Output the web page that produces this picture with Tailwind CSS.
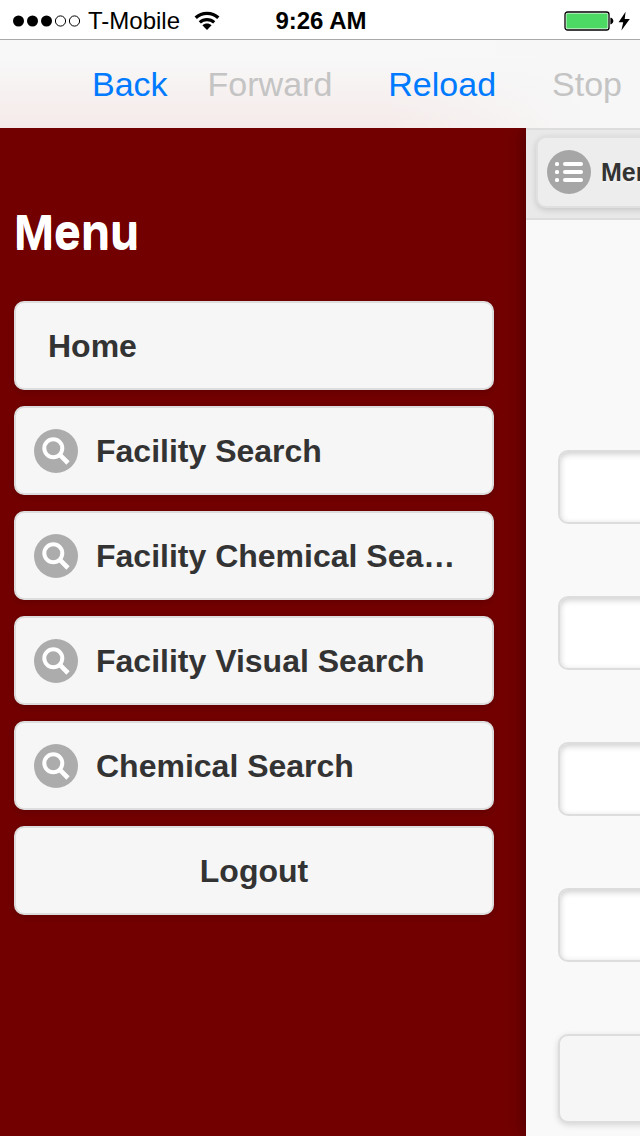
<!DOCTYPE html>
<html lang="en">
<head>
    <meta charset="UTF-8">
    <meta name="viewport" content="width=device-width, initial-scale=1.0">
    <title>Menu</title>
    <script src="https://cdn.jsdelivr.net/npm/@tailwindcss/browser@4"></script>
</head>
<body class="flex flex-col h-screen overflow-hidden bg-[#f9f9f9] text-[#333] font-['Liberation_Sans',Arial,sans-serif]">

    <!-- Icon shapes used more than once -->
    <svg class="hidden">
        <symbol id="icon-search" viewBox="0 0 44 44">
            <circle cx="22" cy="22" r="22" fill="#acacac"/>
            <circle cx="19.3" cy="19.3" r="9" fill="none" stroke="#fff" stroke-width="4"/>
            <path d="M25.4 25.4l8.6 8.6" stroke="#fff" stroke-width="4.6"/>
        </symbol>
    </svg>

    <!-- Status bar -->
    <div class="grid grid-cols-[1fr_auto_1fr] items-center h-10 shrink-0 pl-3 pr-2.5 pt-0.5 bg-white border-b border-[#a9a9a9] text-black text-2xl">
        <div class="flex items-center">
            <svg class="w-[70px] h-4" viewBox="0 0 70 16">
                <circle cx="6.5" cy="8" r="5.5"/>
                <circle cx="20.5" cy="8" r="5.5"/>
                <circle cx="34.5" cy="8" r="5.5"/>
                <circle cx="48.5" cy="8" r="5.1" fill="none" stroke="#000"/>
                <circle cx="62.5" cy="8" r="5.1" fill="none" stroke="#000"/>
            </svg>
            <span class="ml-1.5">T-Mobile</span>
            <svg class="w-[26px] h-5 ml-3.5" viewBox="0 0 26 20" fill="none" stroke="#000">
                <path d="M1.7 6.8C8 .9 18 .9 24.3 6.8" stroke-width="3.4"/>
                <path d="M5.8 11.4C10 7.6 16 7.6 20.2 11.4" stroke-width="3.2"/>
                <path d="M13 19L8.4 14.3C11 12 15 12 17.6 14.3Z" fill="#000" stroke="none"/>
            </svg>
        </div>
        <div class="font-bold">9:26 AM</div>
        <div class="flex items-center justify-end">
            <svg class="w-[50px] h-5" viewBox="0 0 50 20">
                <rect x="1" y="1" width="44" height="18" rx="2.6" fill="none" stroke="#000" stroke-width="1.3"/>
                <rect x="2.4" y="2.4" width="41.2" height="15.2" rx="1" fill="#4cd964"/>
                <path d="M46.4 6.8h.7c3 1.4 3 5 0 6.4h-.7z"/>
            </svg>
            <svg class="w-3 h-5 ml-1" viewBox="0 0 12 20">
                <path d="M7.6.8L.6 11.2h4.6L3.4 19.4 11.8 8H6.7z"/>
            </svg>
        </div>
    </div>

    <div class="flex items-center justify-end h-[88px] shrink-0 pr-[18px] text-[34px] text-[#007aff] relative z-20 bg-[linear-gradient(to_right,transparent_60%,#f7f7f7_92%),linear-gradient(to_bottom,#f8f8f8_20%,#f5eae9)]">
        <button type="button" class="mr-10">Back</button>
        <button type="button" class="mr-14 disabled:text-[#c4c4c4]" disabled>Forward</button>
        <button type="button" class="mr-14">Reload</button>
        <button type="button" class="disabled:text-[#c4c4c4]" disabled>Stop</button>
    </div>

    <div class="flex flex-1 min-h-0">
        <!-- Menu panel -->
        <nav class="w-[526px] shrink-0 pl-3.5 pr-8 bg-[#720000]">
            <h1 class="mt-[76px] mb-[41px] text-5xl leading-14 font-bold text-white [text-shadow:0_2px_0_#fff]">Menu</h1>
            <div class="flex flex-col gap-4 text-[32px] font-bold">
                <a href="#" class="flex items-center h-[89px] px-8 rounded-[10px] border-2 border-[#ddd] bg-[#f6f6f6] shadow-[0_2px_6px_rgba(0,0,0,0.15)]">Home</a>
                <a href="#" class="flex items-center gap-[18px] h-[89px] pl-[18px] pr-8 rounded-[10px] border-2 border-[#ddd] bg-[#f6f6f6] shadow-[0_2px_6px_rgba(0,0,0,0.15)]">
                    <svg class="size-11 shrink-0"><use href="#icon-search"/></svg>
                    <span class="truncate">Facility Search</span>
                </a>
                <a href="#" class="flex items-center gap-[18px] h-[89px] pl-[18px] pr-8 rounded-[10px] border-2 border-[#ddd] bg-[#f6f6f6] shadow-[0_2px_6px_rgba(0,0,0,0.15)]">
                    <svg class="size-11 shrink-0"><use href="#icon-search"/></svg>
                    <span class="truncate">Facility Chemical Search</span>
                </a>
                <a href="#" class="flex items-center gap-[18px] h-[89px] pl-[18px] pr-8 rounded-[10px] border-2 border-[#ddd] bg-[#f6f6f6] shadow-[0_2px_6px_rgba(0,0,0,0.15)]">
                    <svg class="size-11 shrink-0"><use href="#icon-search"/></svg>
                    <span class="truncate">Facility Visual Search</span>
                </a>
                <a href="#" class="flex items-center gap-[18px] h-[89px] pl-[18px] pr-8 rounded-[10px] border-2 border-[#ddd] bg-[#f6f6f6] shadow-[0_2px_6px_rgba(0,0,0,0.15)]">
                    <svg class="size-11 shrink-0"><use href="#icon-search"/></svg>
                    <span class="truncate">Chemical Search</span>
                </a>
                <button type="button" class="h-[89px] px-8 rounded-[10px] border-2 border-[#ddd] bg-[#f6f6f6] shadow-[0_2px_6px_rgba(0,0,0,0.15)]">Logout</button>
            </div>
        </nav>

        <!-- Page pushed aside by the panel -->
        <main class="w-full shrink-0 relative z-10 bg-[#f9f9f9] shadow-[0_0_18px_rgba(0,0,0,0.4)]">
            <header class="flex px-2.5 py-1.5 h-[92px] border-y-2 border-[#ddd] bg-[#e9e9e9]">
                <button type="button" class="flex items-center gap-2.5 h-[72px] pl-[9px] pr-5 rounded-[10px] border-2 border-[#e0e0e0] bg-[#ededed] text-[25px] font-bold shadow-[0_2px_6px_rgba(0,0,0,0.15)] [text-shadow:0_2px_0_#f3f3f3]">
                    <svg class="size-11" viewBox="0 0 44 44">
                        <circle cx="22" cy="22" r="22" fill="#a6a6a6"/>
                        <g fill="#fff">
                            <rect x="8" y="12" width="4" height="4" rx="1.6"/>
                            <rect x="16" y="12" width="20" height="4" rx="2"/>
                            <rect x="8" y="20" width="4" height="4" rx="1.6"/>
                            <rect x="16" y="20" width="20" height="4" rx="2"/>
                            <rect x="8" y="28" width="4" height="4" rx="1.6"/>
                            <rect x="16" y="28" width="20" height="4" rx="2"/>
                        </g>
                    </svg>
                    <span class="pt-0.5">Menu</span>
                </button>
            </header>
            <form class="flex flex-col gap-[72px] mt-[230px] px-8">
                <input type="text" aria-label="Name" class="h-[74px] px-3 rounded-[10px] border-2 border-[#ddd] bg-white text-[32px] shadow-[inset_0_2px_6px_rgba(0,0,0,0.2)]">
                <input type="text" aria-label="Address" class="h-[74px] px-3 rounded-[10px] border-2 border-[#ddd] bg-white text-[32px] shadow-[inset_0_2px_6px_rgba(0,0,0,0.2)]">
                <input type="text" aria-label="City" class="h-[74px] px-3 rounded-[10px] border-2 border-[#ddd] bg-white text-[32px] shadow-[inset_0_2px_6px_rgba(0,0,0,0.2)]">
                <input type="text" aria-label="Zip" class="h-[74px] px-3 rounded-[10px] border-2 border-[#ddd] bg-white text-[32px] shadow-[inset_0_2px_6px_rgba(0,0,0,0.2)]">
                <button type="submit" aria-label="Search" class="h-[89px] rounded-[10px] border-2 border-[#ddd] bg-[#f6f6f6] shadow-[0_2px_6px_rgba(0,0,0,0.15)]"></button>
            </form>
        </main>
    </div>

</body>
</html>
